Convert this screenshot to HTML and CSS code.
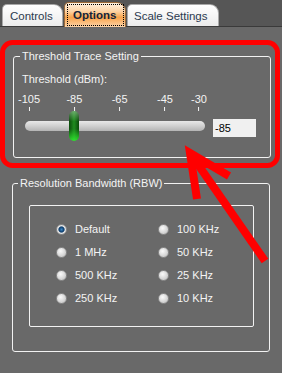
FILE: index.html
```html
<!DOCTYPE html>
<html lang="en">
<head>
    <meta charset="UTF-8">
    <meta name="viewport" content="width=device-width, initial-scale=1.0">
    <title>Options</title>
    <link rel="stylesheet" href="styles.css">
</head>
<body>

    <div class="tabstrip">
        <div class="tab tab-controls">Controls</div>
        <div class="tab tab-active"><span class="focus">Options</span></div>
        <div class="tab tab-scale">Scale Settings</div>
    </div>

    <div class="panel">
        <div class="group group-threshold">
            <div class="group-title">Threshold Trace Setting</div>
            <div class="field-label">Threshold (dBm):</div>

            <!-- scale runs from -105 to -30 -->
            <div class="scale">
                <div class="tick" style="left: 0%">-105</div>
                <div class="tick" style="left: 26.67%">-85</div>
                <div class="tick" style="left: 53.33%">-65</div>
                <div class="tick" style="left: 80%">-45</div>
                <div class="tick" style="left: 100%">-30</div>
            </div>

            <div class="slider-row">
                <div class="trackbar">
                    <div class="track"></div>
                    <div class="thumb" style="left: 44px"></div>
                </div>
                <div class="value-box">-85</div>
            </div>
        </div>

        <div class="group group-rbw">
            <div class="group-title">Resolution Bandwidth (RBW)</div>
            <div class="radio-box">
                <div class="radio checked"><span class="dot"></span>Default</div>
                <div class="radio"><span class="dot"></span>100 KHz</div>
                <div class="radio"><span class="dot"></span>1 MHz</div>
                <div class="radio"><span class="dot"></span>50 KHz</div>
                <div class="radio"><span class="dot"></span>500 KHz</div>
                <div class="radio"><span class="dot"></span>25 KHz</div>
                <div class="radio"><span class="dot"></span>250 KHz</div>
                <div class="radio"><span class="dot"></span>10 KHz</div>
            </div>
        </div>
    </div>

    <!-- red highlight drawn over the screenshot -->
    <svg class="annotation" width="282" height="373" viewBox="0 0 282 373">
        <rect x="2.5" y="42.5" width="275" height="123" rx="10" fill="none" stroke="#ff0000" stroke-width="5"/>
        <g stroke="#ff0000" stroke-width="8" fill="none">
            <line x1="265" y1="261" x2="190" y2="153"/>
            <polyline points="197,199 190,153 229,176"/>
        </g>
    </svg>

</body>
</html>
```

FILE: styles.css
```css
body {
    margin: 0;
    width: 282px;
    height: 373px;
    overflow: hidden;
    position: relative;
    background-color: #696969;
    font-family: "Liberation Sans", Arial, sans-serif;
    font-size: 11px;
    color: #f4f4f4;
}

/* Tab header */
.tabstrip {
    display: flex;
    align-items: flex-end;
    gap: 1px;
    height: 26px;
    padding-left: 2px;
    background-color: #565656;
    border-bottom: 1px solid #3a3a3a;
}

.tab {
    box-sizing: border-box;
    height: 22px;
    padding-top: 3px;
    border: 1px solid #a8a8a8;
    border-bottom: none;
    border-radius: 5px 9px 0 0;
    background: linear-gradient(#ffffff, #ebebeb);
    color: #2b3a4f;
    font-size: 11.5px;
    line-height: 16px;
}

.tab-controls {
    width: 61px;
    padding-left: 7px;
}

.tab-scale {
    width: 92px;
    padding-left: 6px;
}

.tab-active {
    width: 62px;
    height: 25px;
    margin-bottom: -1px;
    padding: 1px 0 0 2px;
    border-color: #9a6a3a;
    background: linear-gradient(#fff2e2, #fdd2a2 35%, #f8a44c 60%, #fcd3a8);
    color: #13233a;
    font-weight: bold;
}

.focus {
    display: block;
    box-sizing: border-box;
    width: 57px;
    height: 22px;
    padding: 2px 0 0 5px;
    border: 1px dotted #000;
}

/* Group boxes */
.group {
    box-sizing: border-box;
    border: 1px solid #f2f2f2;
    border-radius: 3px;
}

.group-title {
    width: fit-content;
    padding: 0 2px;
    background-color: #696969;
    line-height: 13px;
}

.group-threshold {
    margin: 29px 11px 0 13px;
    padding-bottom: 16px;
}

.group-threshold .group-title {
    margin: -7px 0 0 6px;
}

.field-label {
    margin: 10px 0 0 8px;
    line-height: 13px;
}

.scale {
    position: relative;
    width: 170px;
    height: 18px;
    margin: 7px 0 0 15px;
}

.tick {
    position: absolute;
    top: 0;
    transform: translateX(-50%);
    display: flex;
    flex-direction: column;
    align-items: center;
    line-height: 13px;
}

.tick::after {
    content: "";
    width: 1px;
    height: 4px;
    margin-top: 1px;
    background-color: #f4f4f4;
}

.slider-row {
    display: flex;
    align-items: flex-start;
    margin-left: 11px;
}

.trackbar {
    position: relative;
    width: 180px;
    height: 30px;
}

.track {
    height: 10px;
    margin-top: 10px;
    border-radius: 5px;
    background: linear-gradient(#e8e8e8, #d2d2d2 45%, #b4b4b4);
}

.thumb {
    position: absolute;
    top: 0;
    width: 10px;
    height: 30px;
    border-radius: 5px;
    background:
        linear-gradient(rgba(255, 255, 255, 0.35), rgba(255, 255, 255, 0) 35%, rgba(40, 255, 40, 0) 60%, rgba(50, 240, 50, 0.85)),
        linear-gradient(to right, #0b4a0b, #1f8c1f 50%, #0b4a0b);
}

.value-box {
    box-sizing: border-box;
    width: 43px;
    height: 18px;
    margin: 8px 0 0 8px;
    padding-left: 2px;
    background-color: #f0f0f0;
    color: #000;
    line-height: 18px;
}

.group-rbw {
    margin: 25px 12px 0 12px;
    padding-bottom: 24px;
}

.group-rbw .group-title {
    margin: -7px 0 0 5px;
}

.radio-box {
    box-sizing: border-box;
    width: 225px;
    height: 122px;
    margin: 15px 0 0 16px;
    padding: 12px 0 0 26px;
    border: 1px solid #f2f2f2;
    border-radius: 2px;
    display: grid;
    grid-template-columns: 102px 1fr;
    grid-auto-rows: 23px;
}

.radio {
    display: flex;
    align-items: center;
    gap: 8px;
    line-height: 13px;
}

.dot {
    box-sizing: border-box;
    width: 11px;
    height: 11px;
    border-radius: 50%;
    border: 1px solid #8c8c8c;
    background: radial-gradient(circle at 40% 35%, #fafafa, #d8d8d8 55%, #b8b8b8);
}

.radio.checked .dot {
    background: radial-gradient(circle at 50% 50%, #3a86c4 0, #0c3b6a 2.6px, #e6e6e6 3.6px, #c4c4c4);
}

/* Annotation overlay */
.annotation {
    position: absolute;
    top: 0;
    left: 0;
    pointer-events: none;
}
```
